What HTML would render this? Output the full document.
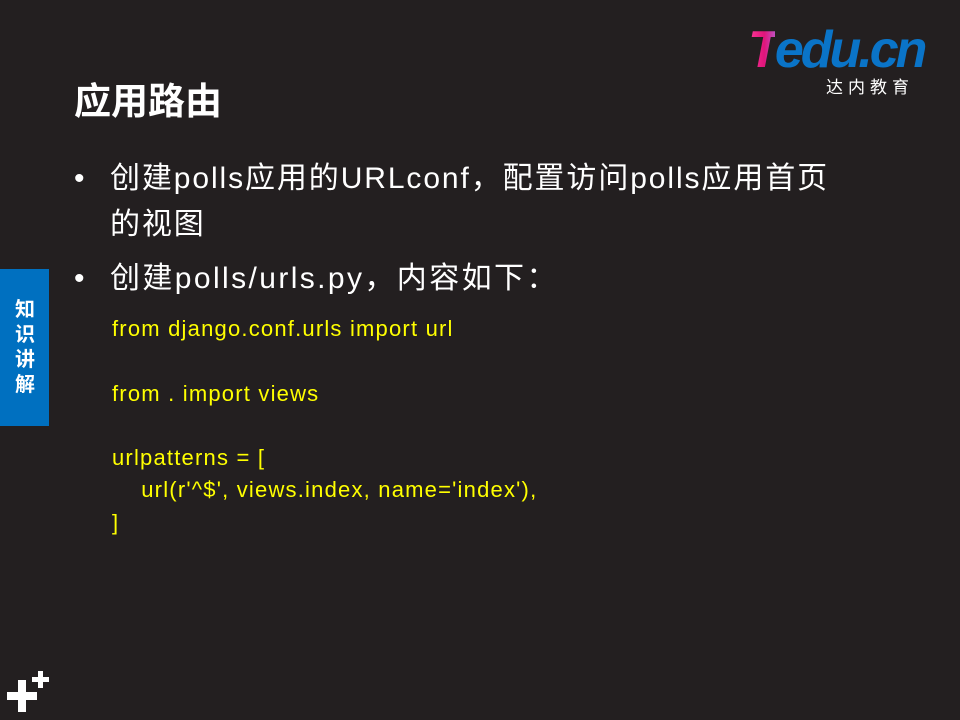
<!DOCTYPE html>
<html><head><meta charset="utf-8"><style>
body{margin:0;width:960px;height:720px;background:#231f20;position:relative;overflow:hidden;font-family:"Liberation Sans","Noto Sans CJK SC",sans-serif;color:#fff}
.a{position:absolute}
</style></head><body>
<div class="a" style="left:748px;top:22px;font:italic bold 52px 'Liberation Sans',sans-serif;letter-spacing:-3px;line-height:56px"><span style="background:linear-gradient(90deg,#ff3a9a,#e0147a 60%,#c050c0);-webkit-background-clip:text;color:transparent">T</span><span style="color:#0a74c8">edu.cn</span></div>
<div class="a" style="left:826px;top:75px;font-size:17px;letter-spacing:5px;font-family:'Noto Sans CJK SC',sans-serif;line-height:22px">达内教育</div>
<div class="a" style="left:74px;top:72px;font-size:37px;font-weight:bold;font-family:'Noto Sans CJK SC',sans-serif;line-height:52px">应用路由</div>
<div class="a" style="left:74px;top:156px;font-size:30px;line-height:46px;font-family:'Liberation Sans','Noto Sans CJK SC',sans-serif;width:850px">
<div style="position:relative;padding-left:36px;letter-spacing:1.9px">
<span style="position:absolute;left:0">•</span>创建polls应用的URLconf，配置访问polls应用首页<br>的视图</div>
<div style="position:relative;padding-left:36px;margin-top:8px;letter-spacing:2.4px"><span style="position:absolute;left:0">•</span>创建polls/urls.py，内容如下：</div>
</div>
<div class="a" style="left:112px;top:313px;color:#ffff00;font-size:22px;line-height:32.3px;white-space:pre;letter-spacing:1.2px">from django.conf.urls import url

from . import views

urlpatterns = [
    url(r'^$', views.index, name='index'),
]</div>
<div class="a" style="left:0;top:269px;width:49px;height:157px;background:#0070c0"></div>
<div class="a" style="left:12px;top:295px;width:26px;font-size:20px;font-weight:bold;line-height:25px;font-family:'Noto Sans CJK SC',sans-serif;text-align:center">知识讲解</div>
<div class="a" style="left:7px;top:692px;width:30px;height:8px;background:#fff"></div>
<div class="a" style="left:18px;top:680px;width:8px;height:32px;background:#fff"></div>
<div class="a" style="left:32px;top:677px;width:17px;height:5px;background:#fff"></div>
<div class="a" style="left:38px;top:671px;width:5px;height:17px;background:#fff"></div>
</body></html>
